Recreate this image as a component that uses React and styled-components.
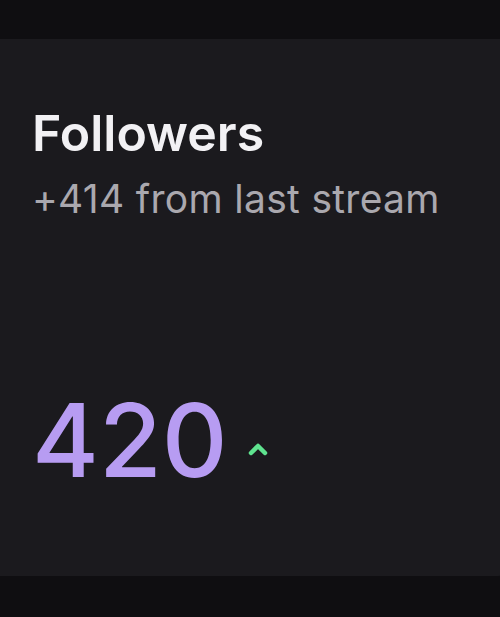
import React from "react";
import styled, { createGlobalStyle } from "styled-components";

const GlobalStyle = createGlobalStyle`
  html, body {
    margin: 0;
    padding: 0;
    background: #0f0e11;
  }
  body {
    font-family: Inter, "Noto Sans", sans-serif;
    -webkit-font-smoothing: antialiased;
  }
`;

const Page = styled.div`
  height: 617px;
  padding: 39px 0 41px;
  box-sizing: border-box;
  overflow: hidden;
`;

const Card = styled.section`
  height: 100%;
  margin-right: -12px;
  background: #1b1a1e;
  border-radius: 0 0 14px 0;
  padding: 67px 32px 0;
  box-sizing: border-box;
  display: flex;
  flex-direction: column;
`;

const Title = styled.h2`
  margin: 0;
  font-size: 50px;
  font-weight: 600;
  line-height: 1.1;
  color: #f2f1f4;
`;

const Subtitle = styled.p`
  margin: 14px 0 0;
  font-size: 39px;
  font-weight: 400;
  letter-spacing: 0.3px;
  color: #aaa8ae;
`;

const StatRow = styled.div`
  margin-top: 167px;
  display: flex;
  align-items: center;
  gap: 17px;
`;

const Value = styled.span`
  font-size: 102px;
  font-weight: 540;
  line-height: 1;
  color: #b79cf2;
`;

const Trend = styled.svg`
  width: 26px;
  height: 18px;
  margin-top: 18px;
`;

export default function App() {
  return (
    <>
      <GlobalStyle />
      <Page>
        <Card>
          <Title>Followers</Title>
          <Subtitle>+414 from last stream</Subtitle>
          <StatRow>
            <Value>420</Value>
            <Trend viewBox="0 0 26 18">
              <path
                d="M6 13 L13 6 L20 13"
                fill="none"
                stroke="#5fe38f"
                strokeWidth="4.5"
                strokeLinecap="round"
                strokeLinejoin="round"
              />
            </Trend>
          </StatRow>
        </Card>
      </Page>
    </>
  );
}
